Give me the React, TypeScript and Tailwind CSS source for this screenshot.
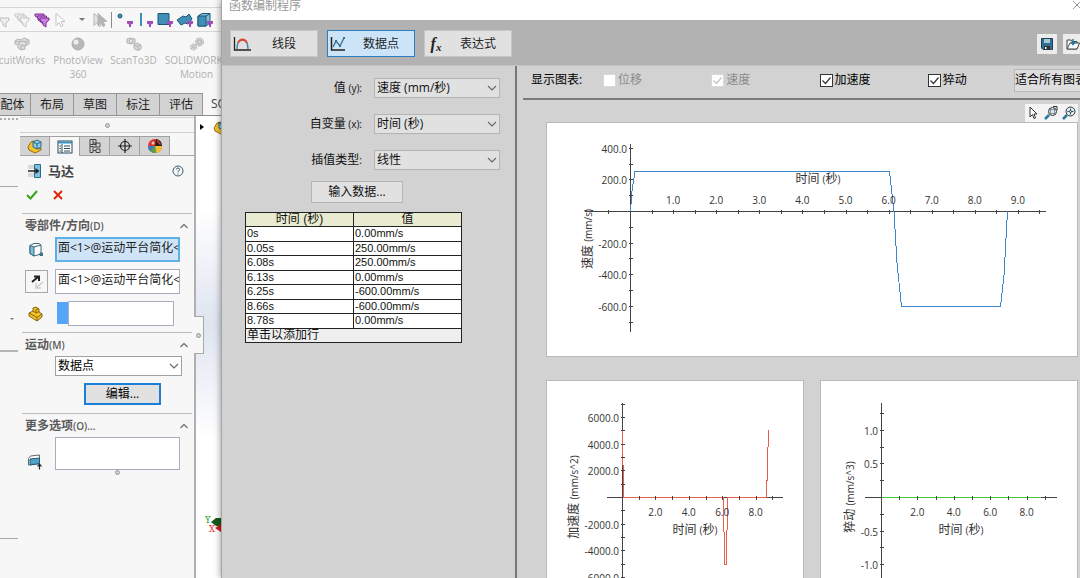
import type { ReactNode } from "react";

interface AxisLabel {
  at: number;
  text: string;
}

interface ChartProps {
  width: number;
  height: number;
  origin: [number, number];
  xRange: [number, number];
  yRange: [number, number];
  xTicks: number[];
  yTicks: number[];
  xLabels: AxisLabel[];
  yLabels: AxisLabel[];
  xLabelY: number;
  xTitle: [number, number];
  yTitle: [number, number];
  yName: string;
  yUnit: string;
  path: string;
  color: string;
}

const rows = [
  ["0s", "0.00mm/s"],
  ["0.05s", "250.00mm/s"],
  ["6.08s", "250.00mm/s"],
  ["6.13s", "0.00mm/s"],
  ["6.25s", "-600.00mm/s"],
  ["8.66s", "-600.00mm/s"],
  ["8.78s", "0.00mm/s"],
];

// evenly spaced tick positions around an origin
function ticks(origin: number, step: number, from: number, to: number) {
  const out: number[] = [];
  for (let i = from; i <= to; i++) {
    if (i !== 0) out.push(origin + i * step);
  }
  return out;
}

function Chart(props: ChartProps) {
  const { width, height, origin, xRange, yRange, xTitle, yTitle } = props;
  const [ox, oy] = origin;

  return (
    <div className="border border-[#b9b9b9] bg-white">
      <svg viewBox={`0 0 ${width} ${height}`} className="block w-full" fill="#333" fontSize="10">
        <g stroke="#444" strokeWidth="1" shapeRendering="crispEdges">
          <line x1={xRange[0]} x2={xRange[1]} y1={oy + 0.5} y2={oy + 0.5} />
          <line x1={ox + 0.5} x2={ox + 0.5} y1={yRange[0]} y2={yRange[1]} />
          <path d={props.path} fill="none" stroke={props.color} />
          {props.xTicks.map((x) => (
            <line key={x} x1={x + 0.5} x2={x + 0.5} y1={oy - 1} y2={oy + 3} />
          ))}
          {props.yTicks.map((y) => (
            <line key={y} x1={ox - 1} x2={ox + 3} y1={y + 0.5} y2={y + 0.5} />
          ))}
        </g>
        {props.xLabels.map((l) => (
          <text key={l.text} x={l.at} y={props.xLabelY} textAnchor="middle">
            {l.text}
          </text>
        ))}
        {props.yLabels.map((l) => (
          <text key={l.text} x={ox - 3} y={l.at + 5} textAnchor="end">
            {l.text}
          </text>
        ))}
        <text x={xTitle[0]} y={xTitle[1]} textAnchor="middle" fontSize="12">
          时间 <tspan fontSize="10">(</tspan>秒<tspan fontSize="10">)</tspan>
        </text>
        <text
          transform={`translate(${yTitle[0]} ${yTitle[1]}) rotate(-90)`}
          textAnchor="middle"
          fontSize="12"
        >
          {props.yName} <tspan fontSize="10">{props.yUnit}</tspan>
        </text>
      </svg>
    </div>
  );
}

function Chevron({ up = false }: { up?: boolean }) {
  return (
    <svg viewBox="0 0 10 6" className="h-[6px] w-[10px]" fill="none" stroke="#666" strokeWidth="1.1">
      <path d={up ? "M1.500 5l3.500-3.500 3.500 3.500" : "M1 1l4 4 4-4"} />
    </svg>
  );
}

interface SelectProps {
  id: string;
  label?: string;
  value: string;
  className: string;
}

function Select({ id, label, value, className }: SelectProps) {
  return (
    <div className="relative">
      <select
        id={id}
        aria-label={label}
        className={`block w-full appearance-none border pl-[2px] pr-4 text-xs outline-none ${className}`}
      >
        <option>{value}</option>
      </select>
      <span className="pointer-events-none absolute inset-y-0 right-[3px] flex items-center">
        <Chevron />
      </span>
    </div>
  );
}

function Check({ label, checked, disabled = false }: { label: string; checked: boolean; disabled?: boolean }) {
  return (
    <label className={`flex items-center gap-[2px] ${disabled ? "text-[#8a8a8a]" : "text-black"}`}>
      <span className="relative block size-[13px]">
        <input
          type="checkbox"
          defaultChecked={checked}
          disabled={disabled}
          className="peer block size-[13px] appearance-none border border-[#333] bg-white disabled:border-[#d8d8d8]"
        />
        <svg
          viewBox="0 0 13 13"
          className="pointer-events-none absolute inset-0 hidden size-[13px] peer-checked:block"
          fill="none"
          stroke={disabled ? "#c4c4c4" : "#333"}
          strokeWidth="1.2"
        >
          <path d="M2.500 6.500l3 3 5-6" />
        </svg>
      </span>
      {label}
    </label>
  );
}

function Section({ title, hotkey, children }: { title: string; hotkey: string; children: ReactNode }) {
  return (
    <section className="mx-[2px] border-t border-[#bdbdbd]">
      <h2 className="flex h-[23px] items-center justify-between pl-[3px] pr-[3px] text-xs font-bold text-[#5a5a5a]">
        <span>
          {title}
          <span className="text-[10px] font-semibold">{hotkey}</span>
        </span>
        <Chevron up />
      </h2>
      {children}
    </section>
  );
}

/* Icons */

function Funnel({ color, fill, many = false }: { color: string; fill: string; many?: boolean }) {
  return (
    <svg viewBox="0 0 16 16" className="size-4" fill={fill} stroke={color} strokeWidth="1">
      {many && <path d="M1 2h9v2l-3 3v3l-3-2V6L1 4z" />}
      {many && <path d="M3.500 4h9v2l-3 3v3l-3-2V8l-3-2z" />}
      <path d="M6 6h9v2l-3 3v4l-3-2v-2L6 8z" />
    </svg>
  );
}

function Arrow({ color, double = false }: { color: string; double?: boolean }) {
  return (
    <svg viewBox="0 0 16 16" className="size-4" fill={double ? "#e4e4e4" : "#fff"} stroke={color}>
      <path d="M2 1.500v12l3-3 2 4 2-1-2-4h4z" />
      {double && <path d="M6 1.500v12l3-3 2 4 2-1-2-4h4z" fill={color} />}
    </svg>
  );
}

// selection filter: blue shape with a small purple funnel in the corner
function FilterIcon({ children }: { children: ReactNode }) {
  return (
    <svg viewBox="0 0 18 16" className="h-4 w-[18px]">
      <g fill="#3f8fb8" stroke="#1d5672" strokeWidth="1">
        {children}
      </g>
      <path d="M11 9h6v2.500l-2 1V15h-2v-2.500l-2-1z" fill="#9b4fb5" />
    </svg>
  );
}

function PartIcon() {
  return (
    <svg viewBox="0 0 16 16" className="size-4" strokeWidth=".9" strokeLinejoin="round">
      <path d="M1 9l3-5 3-1v5l5 3 2-1v2l-6 3-6-3z" fill="#f5c22b" stroke="#8a6200" />
      <path d="M6 4l4-2 4 2v5l-4 2-4-2z" fill="#8fcbe4" stroke="#1e607e" />
      <path d="M6 4l4 2 4-2M10 6v5" fill="none" stroke="#1e607e" />
    </svg>
  );
}

function YellowPart() {
  return (
    <svg viewBox="0 0 16 16" className="size-4" stroke="#7a5a00" strokeWidth=".9" strokeLinejoin="round">
      <path d="M1 7l4-2V2l3-1 3 2v3l3 2v3l-5 4-8-5z" fill="#f3c32f" />
      <path d="M1 7l8 4.500 5-3.500M9 11.500V15M5 5l3 2 3-1.500M8 7V3.500l3-1" fill="none" />
    </svg>
  );
}

function PropertyIcon() {
  return (
    <svg viewBox="0 0 16 16" className="size-4" fill="#fff" stroke="#2b4858">
      <rect x="1" y="2" width="14" height="12" />
      <path d="M1 3.500h14" stroke="#3a91b8" strokeWidth="2" />
      <path d="M5 5v9M7 7h6M7 9.500h6M7 12h6M2.500 7h1.500M2.500 9.500h1.500M2.500 12h1.500" />
    </svg>
  );
}

function ConfigIcon() {
  return (
    <svg viewBox="0 0 16 16" className="size-4" fill="none" stroke="#444">
      <path d="M3 1.500v13M3 1.500h6v5H3M6 1.500v5M3 14.500h3v-6h-3M6 5h3" />
      <path d="M9 5h4v4H9zM9 11h4v3.500H9zM6 12.500h3M6 9h3" />
    </svg>
  );
}

function TargetIcon() {
  return (
    <svg viewBox="0 0 16 16" className="size-4" fill="none" stroke="#222" strokeWidth="1.2">
      <circle cx="8" cy="8" r="4.500" />
      <path d="M8 1v14M1 8h14" />
    </svg>
  );
}

function BallIcon() {
  return (
    <svg viewBox="0 0 16 16" className="size-4">
      <circle cx="8" cy="8" r="7" fill="#d9342b" />
      <path d="M8 8l1-7a7 7 0 0 1 6 7z" fill="#222" />
      <path d="M8 8h7a7 7 0 0 1-6 7z" fill="#f2c12e" />
      <path d="M8 8l1 7a7 7 0 0 1-6-2z" fill="#4ba84a" />
      <path d="M8 8l-5 5a7 7 0 0 1-2-5z" fill="#3b7ec4" />
      <path d="M10 2.500l3.500 4" stroke="#e0483c" strokeWidth="1.200" />
      <circle cx="6" cy="5" r="1.500" fill="#fff" opacity=".7" />
    </svg>
  );
}

function MotorIcon() {
  return (
    <svg viewBox="0 0 16 16" className="size-4" fill="none">
      <path d="M7.500 1.500h6v13h-6z" fill="#7fc0dc" stroke="#2a6c8a" />
      <path d="M1 3h6M1 5h6M1 11h6M1 13h6" stroke="#bbb" />
      <path d="M1 8h9" stroke="#222" strokeWidth="1.500" />
      <path d="M8.500 5l4 3-4 3z" fill="#222" />
    </svg>
  );
}

function FaceIcon() {
  return (
    <svg viewBox="0 0 16 16" className="size-4" fill="#fff" stroke="#3a6577" strokeLinejoin="round">
      <path d="M2 3.500l4-2h5l2 1.500v9l-7 2-4-2.500z" />
      <path d="M2 3.500l4 1.500v9l-4-2.500z" fill="#7fc0dc" />
      <path d="M6 5l7-2" />
      <rect x="12" y="11" width="2.500" height="2.500" fill="#3a91b8" />
    </svg>
  );
}

function LoadIcon() {
  return (
    <svg viewBox="0 0 16 16" className="size-4" strokeLinejoin="round">
      <path d="M1.500 4.500l2-2.500 9-1v7.500l-2 1.500-9 1z" fill="#fff" stroke="#666" />
      <path d="M3 5l9.500-1v5.500L3 11z" fill="#4ea2c8" stroke="#245b75" />
      <path d="M12.500 15.500v-5M10.500 12.500l2-2.500 2 2.500" fill="none" stroke="#222" strokeWidth="1.200" />
    </svg>
  );
}

function GrayCubes() {
  return (
    <svg viewBox="0 0 16 14" className="h-[14px] w-4" fill="#dcdcdc" stroke="#b4b4b4">
      <path d="M1 4l3-2 3 1 3-2 5 2v4l-4 2v3l-4 1-3-2V8L1 7z" />
      <path d="M1 4l4 1v3M5 5l3-1 4 1 3-2M12 5v4M7 8l4 1M7 8v5" fill="none" />
    </svg>
  );
}

function GrayBall() {
  return (
    <svg viewBox="0 0 14 14" className="size-[14px]">
      <circle cx="7" cy="7" r="6" fill="#b8b8b8" stroke="#aaa" />
      <circle cx="5" cy="5" r="2.500" fill="#eee" />
    </svg>
  );
}

function GrayScan() {
  return (
    <svg viewBox="0 0 16 14" className="h-[14px] w-4" fill="#d8d8d8" stroke="#b4b4b4">
      <path d="M1 2l3-1 5 1v4l-3 1-5-1z" />
      <circle cx="5" cy="4" r="1.500" fill="#fff" />
      <path d="M8 8l3-2 4 2v4l-3 1.500-4-2z" />
      <path d="M8 8l4 1.500L15 8M12 9.500v4" />
    </svg>
  );
}

function GrayGears() {
  return (
    <svg viewBox="0 0 16 14" className="h-[14px] w-4" fill="#d6d6d6" stroke="#aeaeae">
      <circle cx="10.500" cy="5" r="4" strokeDasharray="2 1" />
      <circle cx="10.500" cy="5" r="2" />
      <circle cx="4.500" cy="10" r="3" strokeDasharray="2 1" />
      <circle cx="4.500" cy="10" r="1" fill="#fff" />
    </svg>
  );
}

function Dot() {
  return <span className="block size-[5px] rounded-full border border-[#999] bg-[#d0d0d0]" />;
}

function RibbonItem({ icon, label, className }: { icon: ReactNode; label: string; className: string }) {
  return (
    <button className={`flex shrink-0 flex-col items-center gap-[2px] leading-[14px] ${className}`}>
      {icon}
      <span className="text-center">{label}</span>
    </button>
  );
}

function TopBars() {
  return (
    <>
      <div className="mt-[7px] flex h-6 items-center overflow-hidden border-t border-[#d5d5d5]">
        <div className="-ml-2 flex w-5 shrink-0 justify-center"><Funnel color="#bbb" fill="#eee" /></div>
        <div className="flex w-5 shrink-0 justify-center"><Funnel color="#c4c4c4" fill="#f4f4f4" many /></div>
        <div className="flex w-5 shrink-0 justify-center"><Funnel color="#7d2f96" fill="#c77fdb" many /></div>
        <div className="flex w-5 shrink-0 justify-center"><Arrow color="#c2c2c2" /></div>
        <div className="flex w-5 shrink-0 justify-center">
          <span className="border-x-[3px] border-t-[3px] border-x-transparent border-t-[#777]" />
        </div>
        <div className="flex w-4 shrink-0 justify-center"><Arrow color="#b4b4b4" double /></div>
        <div className="mx-[3px] h-4 w-px shrink-0 bg-[#8a8a8a]" />
        <div className="flex w-5 shrink-0 justify-center">
          <FilterIcon><circle cx="4" cy="4" r="2" /></FilterIcon>
        </div>
        <div className="flex w-5 shrink-0 justify-center">
          <FilterIcon><path d="M5 1v13" stroke="#3a91b8" strokeWidth="2" /></FilterIcon>
        </div>
        <div className="flex w-5 shrink-0 justify-center">
          <FilterIcon><path d="M2 1.500h11v11H2z" /></FilterIcon>
        </div>
        <div className="flex w-5 shrink-0 justify-center">
          <FilterIcon><path d="M1 8l6-4 3 1 3-3 3 5-4 5-3-1-4 2z" /></FilterIcon>
        </div>
        <div className="flex w-5 shrink-0 justify-center">
          <FilterIcon>
            <path d="M2 4l4-2.500h8V11l-4 3H2z" fill="#7fc0dc" />
            <path d="M2 4h8v10H2z" />
            <path d="M10 4l4-2.500" />
          </FilterIcon>
        </div>
      </div>

      <div className="flex h-[62px] overflow-hidden border-t border-[#d5d5d5] pt-[5px] text-[10px] text-[#b0b0b0]">
        <RibbonItem icon={<GrayCubes />} label="cuitWorks" className="-ml-1 w-[52px]" />
        <RibbonItem icon={<GrayBall />} label="PhotoView 360" className="w-[60px]" />
        <RibbonItem icon={<GrayScan />} label="ScanTo3D" className="w-[51px]" />
        <RibbonItem icon={<GrayGears />} label="SOLIDWORKS Motion" className="w-[75px]" />
      </div>

      <nav className="flex h-[23px] overflow-hidden border-b border-[#8f8f8f] text-xs">
        {["配体", "布局", "草图", "标注", "评估"].map((t, i) => (
          <button
            key={t}
            className={`shrink-0 border-r border-t border-[#969696] bg-[#d3d3d3] text-[#222] ${
              i === 0 ? "w-[31px] pr-[5px]" : "w-[43px]"
            }`}
          >
            {t}
          </button>
        ))}
        <button className="shrink-0 pl-2 text-[#444]">SOLIDWORKS</button>
      </nav>
    </>
  );
}

function PropertyPanel() {
  const tabs = [
    { name: "特征树", icon: <PartIcon /> },
    { name: "属性", icon: <PropertyIcon /> },
    { name: "配置", icon: <ConfigIcon /> },
    { name: "尺寸", icon: <TargetIcon /> },
    { name: "外观", icon: <BallIcon /> },
  ];

  return (
    <div className="ml-[2px] flex w-[174px] shrink-0 flex-col">
      <div className="mt-[1px] flex h-4 items-center justify-center border-y border-[#cfcfcf]">
        <Dot />
      </div>
      <div className="mt-[3px] flex h-5 shrink-0 border-b border-[#a8a8a8]">
        {tabs.map((tab, i) => (
          <button
            key={tab.name}
            aria-label={tab.name}
            className={`flex w-[30px] items-center justify-center border-r border-t border-[#a0a0a0] ${
              i === 1 ? "-mb-px bg-[#f7f7f7]" : "bg-[#d3d3d3]"
            }`}
          >
            {tab.icon}
          </button>
        ))}
      </div>

      <div className="mt-[6px] flex items-center gap-[5px] pl-[7px] pr-[10px]">
        <MotorIcon />
        <h1 className="flex-1 text-[13px] font-bold leading-[18px] text-[#444]">马达</h1>
        <button aria-label="help">
          <svg viewBox="0 0 12 12" className="size-3" fill="none" stroke="#3c5a6c">
            <circle cx="6" cy="6" r="5" />
            <path d="M4.500 4.500q0-1.500 1.500-1.500t1.500 1.500-1.500 2v.8M6 8.500v1" />
          </svg>
        </button>
      </div>

      <div className="mb-3 mt-[9px] flex gap-[14px] pl-[6px]">
        <button aria-label="ok">
          <svg viewBox="0 0 12 12" className="size-3" fill="none" stroke="#37a316" strokeWidth="2">
            <path d="M1 6l3.500 3.500L11 2" />
          </svg>
        </button>
        <button aria-label="cancel">
          <svg viewBox="0 0 12 12" className="size-3" fill="none" stroke="#e0280c" strokeWidth="2">
            <path d="M2 2l8 8M10 2l-8 8" />
          </svg>
        </button>
      </div>

      <Section title="零部件/方向" hotkey="(D)">
        <div className="flex flex-col gap-[7px] pb-[6px] pl-[3px] pr-3">
          <div className="flex items-center">
            <span className="flex w-[30px] shrink-0 pl-[3px]"><FaceIcon /></span>
            <input
              aria-label="马达位置"
              readOnly
              value="面<1>@运动平台简化<"
              className="h-[25px] w-full min-w-0 border-2 border-[#5fb0e6] bg-[#cfe5f7] pb-[5px] pl-[1px] text-xs text-[#222] outline-none"
            />
          </div>
          <div className="flex items-center">
            <span className="flex w-[30px] shrink-0">
              <button aria-label="反向" className="flex h-[23px] w-[23px] items-center justify-center border border-[#a8a8a8]">
                <svg viewBox="0 0 16 16" className="size-4" fill="none" strokeWidth="2">
                  <path d="M3 8l6-5M5 2.500h5V7" stroke="#222" />
                  <path d="M14 8l-6 5M7 9v5h5" stroke="#ccc" strokeWidth="1.500" />
                </svg>
              </button>
            </span>
            <input
              aria-label="马达方向"
              readOnly
              value="面<1>@运动平台简化<"
              className="h-[25px] w-full min-w-0 border border-[#a9adbd] bg-white pb-[5px] pl-[2px] text-xs text-[#222] outline-none"
            />
          </div>
          <div className="flex items-center pr-[6px]">
            <span className="flex w-8 shrink-0 pl-[3px]"><YellowPart /></span>
            <span className="-mt-[2px] h-[22px] w-[11px] shrink-0 bg-[#55a6fb]" />
            <input
              aria-label="相对零部件"
              className="h-[25px] w-full min-w-0 border border-[#a9adbd] bg-white outline-none"
            />
          </div>
        </div>
      </Section>

      <Section title="运动" hotkey="(M)">
        <div className="pb-2 pl-[33px] pr-[10px]">
          <Select id="motion" label="运动类型" value="数据点" className="h-5 border-[#a0a0a0] bg-white" />
          <button className="ml-[29px] mt-[7px] block h-[22px] w-[77px] border-2 border-[#1a7fd6] bg-[#e1e1e1] text-xs leading-[18px] text-black">
            编辑...
          </button>
        </div>
      </Section>

      <Section title="更多选项" hotkey="(O)...">
        <div className="flex items-end pl-[3px] pr-3">
          <span className="flex w-[30px] shrink-0 pl-[2px]"><LoadIcon /></span>
          <textarea
            aria-label="载荷所受零部件"
            className="block h-[33px] w-full min-w-0 resize-none border border-[#a9adbd] bg-white outline-none"
          />
        </div>
        <div className="flex justify-center pl-[20px]"><Dot /></div>
      </Section>
    </div>
  );
}

function MainWindow() {
  return (
    <div className="flex w-[221px] shrink-0 flex-col overflow-hidden bg-[#f7f7f7]">
      <TopBars />
      <div className="flex min-h-0 flex-1">
        {/* docked pane on the far left */}
        <div className="flex w-[18px] shrink-0 flex-col">
          <div className="mt-[2px] border-t-2 border-dotted border-[#aaa]" />
          <div className="mt-[66px] border-t border-[#aaa]" />
          <div className="mt-[131px] flex justify-end pr-1">
            <span className="border-x-2 border-t-2 border-x-transparent border-t-[#777]" />
          </div>
          <div className="mt-[30px] border-t-2 border-[#b5b5b5]" />
          <div className="mt-[186px] border-t border-[#aaa]" />
        </div>
        <PropertyPanel />
        {/* graphics area */}
        <div className="relative flex-1 border-l-2 border-[#b0b0b0] bg-linear-to-b from-white from-20% via-[#dfe4f0] via-45% to-white to-70%">
          <div className="flex items-center justify-between pl-1 pt-[3px]">
            <span className="border-y-[3px] border-l-4 border-y-transparent border-l-black" />
            <span className="-mr-2"><PartIcon /></span>
          </div>
          <div className="absolute -left-[2px] top-[200px] flex h-[38px] w-[10px] items-center justify-center border border-l-0 border-[#a8a8a8] bg-[#f7f7f7]">
            <Dot />
          </div>
          {/* orientation triad */}
          <svg viewBox="0 0 16 20" className="absolute right-0 top-[398px] h-5 w-4 font-serif" fontSize="10">
            <text x="0" y="9" fill="#2aa02a">Y</text>
            <text x="4" y="18" fill="#e33">X</text>
            <path d="M6 8l5-4h5v8h-5z" fill="#175a1c" />
            <path d="M10 14l6-4v8z" fill="#d01c1c" />
          </svg>
        </div>
      </div>
    </div>
  );
}

const modeClass =
  "flex h-[27px] w-[88px] items-center border pl-[2px] text-xs text-[#222]";

function ModeBar() {
  return (
    <div className="flex h-[46px] shrink-0 items-center justify-between border-b border-[#c4c4c4] bg-[#b2b2b2] pl-2 pt-[2px]">
      <div className="flex gap-[9px]">
        <button className={`${modeClass} border-[#c6c6c6] bg-[#e1e1e1]`}>
          <svg viewBox="0 0 18 16" className="h-4 w-[18px]" fill="none" strokeWidth="1.300">
            <path d="M1.500 1v13H18" stroke="#222" />
            <path d="M4 13q0-9 5.500-9t5.500 9" stroke="#3b83ad" />
            <path d="M5 7q1.500-3.500 4.500-3.500t4.500 3.500" stroke="#e04a33" strokeWidth="1.800" />
          </svg>
          <span className="flex-1 text-center">线段</span>
        </button>
        <button className={`${modeClass} border-[#2f7cc0] bg-[#cce4f8]`}>
          <svg viewBox="0 0 18 16" className="h-4 w-[18px]" fill="none">
            <path d="M1.500 1v13H15" stroke="#222" strokeWidth="1.500" />
            <path d="M3 11l3-6 4 5 4-8" stroke="#356f91" strokeWidth="1.300" />
            <path d="M5 4h2v2H5zM9 9h2v2H9zM13 1h2v2h-2z" fill="#356f91" />
          </svg>
          <span className="flex-1 text-center">数据点</span>
        </button>
        <button className={`${modeClass} border-[#c6c6c6] bg-[#e1e1e1]`}>
          <span className="w-[18px] text-center font-['Liberation_Serif',serif] text-base font-bold italic leading-4">
            f<sub className="text-[11px]">x</sub>
          </span>
          <span className="flex-1 text-center">表达式</span>
        </button>
      </div>
      <div className="-mr-[3px] flex gap-[6px]">
        <button aria-label="保存" className="flex size-5 items-center justify-center bg-[#ececec]">
          <svg viewBox="0 0 12 12" className="size-3">
            <path d="M.5.5h11v11H2l-1.500-1.500z" fill="#2f6f92" stroke="#1f3f50" />
            <path d="M3 1h6v4H3z" fill="#a9c8d8" />
            <path d="M3 8h6v3.500H3z" fill="#333" />
            <path d="M4 9h1.500v2H4z" fill="#fff" />
          </svg>
        </button>
        <button aria-label="打开" className="flex size-5 items-center justify-center bg-[#ececec]">
          <svg viewBox="0 0 14 12" className="h-3 w-[14px]" fill="#fff" stroke="#444">
            <path d="M1 11V2h4l1 1.500h5V11z" />
            <path d="M1 11l3-6h9.500L11 11z" />
            <path d="M7 1v5M5 4l2 2.500L9 4" fill="none" stroke="#2878a6" strokeWidth="1.500" />
          </svg>
        </button>
      </div>
    </div>
  );
}

function FieldLabel({ id, name, axis }: { id: string; name: string; axis: string }) {
  return (
    <label htmlFor={id} className="text-right text-xs">
      {name}
      <span className="text-[10px]">{axis}</span>
    </label>
  );
}

function DataPoints() {
  const field = "h-5 border-[#b4b4b4] bg-[#e1e1e1]";

  return (
    <div className="flex w-[295px] shrink-0 flex-col border-r-2 border-[#777] pl-[23px] pt-3 text-[#111]">
      <div className="grid grid-cols-[117px_126px] items-center gap-x-3 gap-y-4">
        <FieldLabel id="value" name="值" axis=" (y):" />
        <Select id="value" value="速度 (mm/秒)" className={field} />
        <FieldLabel id="variable" name="自变量" axis=" (x):" />
        <Select id="variable" value="时间 (秒)" className={field} />
        <FieldLabel id="interp" name="插值类型" axis=":" />
        <Select id="interp" value="线性" className={field} />
      </div>
      <button className="ml-[66px] mt-[11px] h-[22px] w-[92px] border border-[#b4b4b4] bg-[#e1e1e1] text-xs">
        输入数据...
      </button>
      <table className="mt-[9px] h-[131px] w-[217px] table-fixed border-collapse bg-white font-['Liberation_Sans','Noto_Sans_CJK_SC',sans-serif] text-[11px] leading-[13px]">
        <thead>
          <tr className="bg-[#e9ebd0]">
            <th className="border border-[#222] p-0 text-xs font-normal leading-[13px]">时间 (秒)</th>
            <th className="border border-[#222] p-0 text-xs font-normal leading-[13px]">值</th>
          </tr>
        </thead>
        <tbody>
          {rows.map(([time, value]) => (
            <tr key={time}>
              <td className="border border-[#222] p-0 pl-px">{time}</td>
              <td className="border border-[#222] p-0 pl-px">{value}</td>
            </tr>
          ))}
          <tr className="bg-[#efefef]">
            <td colSpan={2} className="border border-[#222] p-0 pl-px text-xs leading-[13px]">
              单击以添加行
            </td>
          </tr>
        </tbody>
      </table>
    </div>
  );
}

function Charts() {
  return (
    <div className="flex min-w-0 flex-1 flex-col overflow-hidden">
      <div className="ml-[6px] flex h-[34px] shrink-0 items-center border-b-2 border-[#7a7a7a] pb-1 pl-2 text-xs">
        <span className="w-[72px] shrink-0">显示图表:</span>
        <div className="grid flex-1 grid-cols-4">
          <Check label="位移" checked={false} disabled />
          <Check label="速度" checked disabled />
          <Check label="加速度" checked />
          <Check label="猝动" checked />
        </div>
        <button className="-mr-[22px] -ml-[22px] h-[23px] w-[88px] shrink-0 border border-[#b8b8b8] bg-[#dedede] text-left">
          适合所有图表
        </button>
      </div>

      <div className="flex flex-col pl-[29px] pr-[2px] pt-1">
        <div className="flex h-[18px] w-[53px] items-center justify-around self-end bg-[#f4f4f4]">
          <button aria-label="选择">
            <svg viewBox="0 0 14 14" className="size-[14px]" fill="#fff" stroke="#333">
              <path d="M3 1v10l2.500-2.500L7 12.500l1.500-.6L7 8h3z" />
            </svg>
          </button>
          <button aria-label="局部放大">
            <svg viewBox="0 0 14 14" className="size-[14px]" fill="#dcebf2" stroke="#333">
              <path d="M5 9l-4 4" stroke="#2a78a3" strokeWidth="2.500" />
              <circle cx="8.500" cy="5.500" r="4" />
              <path d="M6.500 3.500h4v4h-4z" fill="none" strokeDasharray="1 1" />
              <path d="M9 .5h4v4" fill="none" />
            </svg>
          </button>
          <button aria-label="整屏显示">
            <svg viewBox="0 0 14 14" className="size-[14px]" fill="#dcebf2" stroke="#333">
              <path d="M5 9l-4 4" stroke="#2a78a3" strokeWidth="2.500" />
              <circle cx="8.500" cy="5.500" r="4.500" />
              <path d="M8.500 2.500v6M5.500 5.500h6" stroke="#2a5d78" />
              <circle cx="8.500" cy="5.500" r="1" fill="#fff" />
            </svg>
          </button>
        </div>
        <Chart
          width={530}
          height={233}
          origin={[83, 88]}
          xRange={[38, 499]}
          yRange={[21, 209]}
          xTicks={ticks(83, 21.55, -1, 19)}
          yTicks={ticks(88, 15.8, -4, 7)}
          xLabels={[1, 2, 3, 4, 5, 6, 7, 8, 9].map((n) => ({ at: 83 + n * 43.1, text: n.toFixed(1) }))}
          yLabels={[400, 200, -200, -400, -600].map((n) => ({ at: 88 - n * 0.158, text: n.toFixed(1) }))}
          xLabelY={81}
          xTitle={[271, 60]}
          yTitle={[45, 116]}
          yName="速度"
          yUnit="(mm/s)"
          path="M83.500 88.500L85 68L88 48.500H342.500L347 88.500L350 140L354.500 183.500H453.500L457 152L460.500 88.500"
          color="#3f86c8"
        />
        <div className="mt-[23px] grid grid-cols-2 gap-4">
          <Chart
            width={256}
            height={234}
            origin={[75, 116]}
            xRange={[60, 236]}
            yRange={[22, 220]}
            xTicks={ticks(75, 16.7, 1, 9)}
            yTicks={ticks(116, 13.35, -7, 7)}
            xLabels={[2, 4, 6, 8].map((n) => ({ at: 75 + n * 16.7, text: n.toFixed(1) }))}
            yLabels={[6000, 4000, 2000, -2000, -4000, -6000].map((n) => ({
              at: 116 - n * 0.01335,
              text: n.toFixed(1),
            }))}
            xLabelY={135}
            xTitle={[148, 153]}
            yTitle={[31, 116]}
            yName="加速度"
            yUnit="(mm/s^2)"
            path="M75.500 49L76.500 116.500H176.500L177.500 183.500H179.500L180.500 116.500H219.500L221.500 49.500"
            color="#e8604c"
          />
          <Chart
            width={256}
            height={234}
            origin={[60, 116]}
            xRange={[44, 236]}
            yRange={[22, 220]}
            xTicks={ticks(60, 18.2, 1, 9)}
            yTicks={ticks(116, 16.8, -5, 5)}
            xLabels={[2, 4, 6, 8].map((n) => ({ at: 60 + n * 18.2, text: n.toFixed(1) }))}
            yLabels={[1, 0.5, -0.5, -1].map((n) => ({ at: 116 - n * 67.2, text: n.toFixed(1) }))}
            xLabelY={135}
            xTitle={[140, 153]}
            yTitle={[33, 116]}
            yName="猝动"
            yUnit="(mm/s^3)"
            path="M60.500 116.500H220"
            color="#45c83c"
          />
        </div>
      </div>
    </div>
  );
}

export default function App() {
  return (
    <div className="flex h-screen overflow-hidden bg-[#f7f7f7] font-['Open_Sans','Noto_Sans_CJK_SC',sans-serif]">
      <MainWindow />

      {/* Function builder dialog */}
      <main className="z-10 flex min-w-0 flex-1 flex-col border-l border-[#a6a6a6] bg-[#d2d2d2] shadow-[-1px_0_6px_rgba(0,0,0,0.35)]">
        <header className="flex h-5 shrink-0 items-start justify-between bg-white pl-[7px] text-xs leading-3 text-[#999]">
          <span>函数编制程序</span>
          <button aria-label="关闭" className="-mr-[2px]">
            <svg viewBox="0 0 10 10" className="size-[10px]" fill="none" stroke="#999">
              <path d="M1 1l8 8M9 1L1 9" />
            </svg>
          </button>
        </header>
        <ModeBar />
        <div className="flex min-h-0 flex-1">
          <DataPoints />
          <Charts />
        </div>
      </main>
    </div>
  );
}
